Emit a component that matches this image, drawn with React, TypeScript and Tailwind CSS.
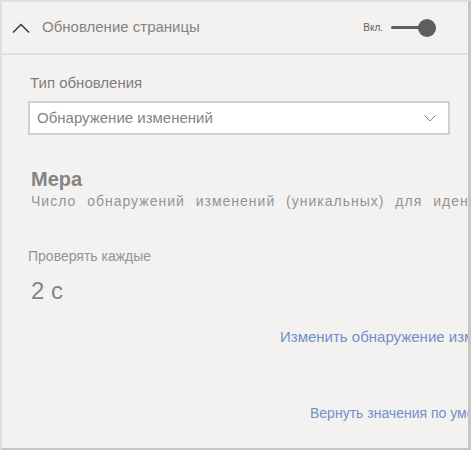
export default function App() {
  return (
    <div
      className="w-[471px] h-[450px] bg-[#f3f2f1] overflow-hidden flex flex-col border-l-2 border-t-2 border-l-[#e1dfdd] border-t-[#e1dfdd] border-r-[3px] border-b-[2px] border-r-[#c8c6c4] border-b-[#c8c6c4]"
      style={{ fontFamily: '"Liberation Sans", Arial, sans-serif' }}
    >
      {/* Header */}
      <div className="h-[53px] shrink-0 flex items-center border-b-2 border-[#e1dfdd]">
        <svg className="ml-[10px] w-[18px] h-[10px]" viewBox="0 0 18 10" fill="none">
          <path d="M1 9.5 L9 1.5 L17 9.5" stroke="#333" strokeWidth="1.4" />
        </svg>
        <span className="ml-[12px] text-[15px] text-[#858381]">Обновление страницы</span>
        <div className="ml-auto mr-[32px] flex items-center">
          <span className="text-[10px] text-[#605e5c] mr-[8px]">Вкл.</span>
          <div className="relative w-[45px] h-[18px] flex items-center">
            <div className="h-[3px] w-[30px] bg-[#605e5c] rounded-full" />
            <div className="absolute right-0 top-0 w-[18px] h-[18px] rounded-full bg-[#605e5c]" />
          </div>
        </div>
      </div>

      {/* Body */}
      <div className="flex-1 overflow-hidden">
        <div className="w-[620px] pl-[26px] pt-[18px]">
          <div className="pl-[2px] text-[15px] text-[#7f7d7b] leading-[20px]">Тип обновления</div>
          <div className="mt-[8px] w-[422px] h-[34px] bg-white border-2 border-[#d2d0ce] flex items-center pl-[7px] pr-[12px]">
            <span className="text-[15px] text-[#858381]">Обнаружение изменений</span>
            <svg className="ml-auto w-[12px] h-[7px]" viewBox="0 0 12 7" fill="none">
              <path d="M0.5 0.5 L6 6 L11.5 0.5" stroke="#8a8886" strokeWidth="1" />
            </svg>
          </div>

          <div className="mt-[32px] pl-[3px] text-[20px] font-semibold text-[#868482] leading-[24px]">Мера</div>
          <div className="mt-0 pl-[3px] text-[14px] text-[#959391] whitespace-nowrap tracking-[1px] [word-spacing:6px]">
            Число обнаружений изменений (уникальных) для идентификатора
          </div>

          <div className="mt-[34px] text-[14px] text-[#959391]">Проверять каждые</div>
          <div className="mt-[10px] pl-[3px] text-[24px] text-[#868482] leading-[28px]">2 с</div>

          <div className="mt-[21px] pl-[252px] text-[15px] text-[#7090c8] whitespace-nowrap">
            Изменить обнаружение изменений
          </div>
          <div className="mt-[54px] pl-[282px] text-[14px] text-[#7090c8] whitespace-nowrap">
            Вернуть значения по умолчанию
          </div>
        </div>
      </div>
    </div>
  );
}
